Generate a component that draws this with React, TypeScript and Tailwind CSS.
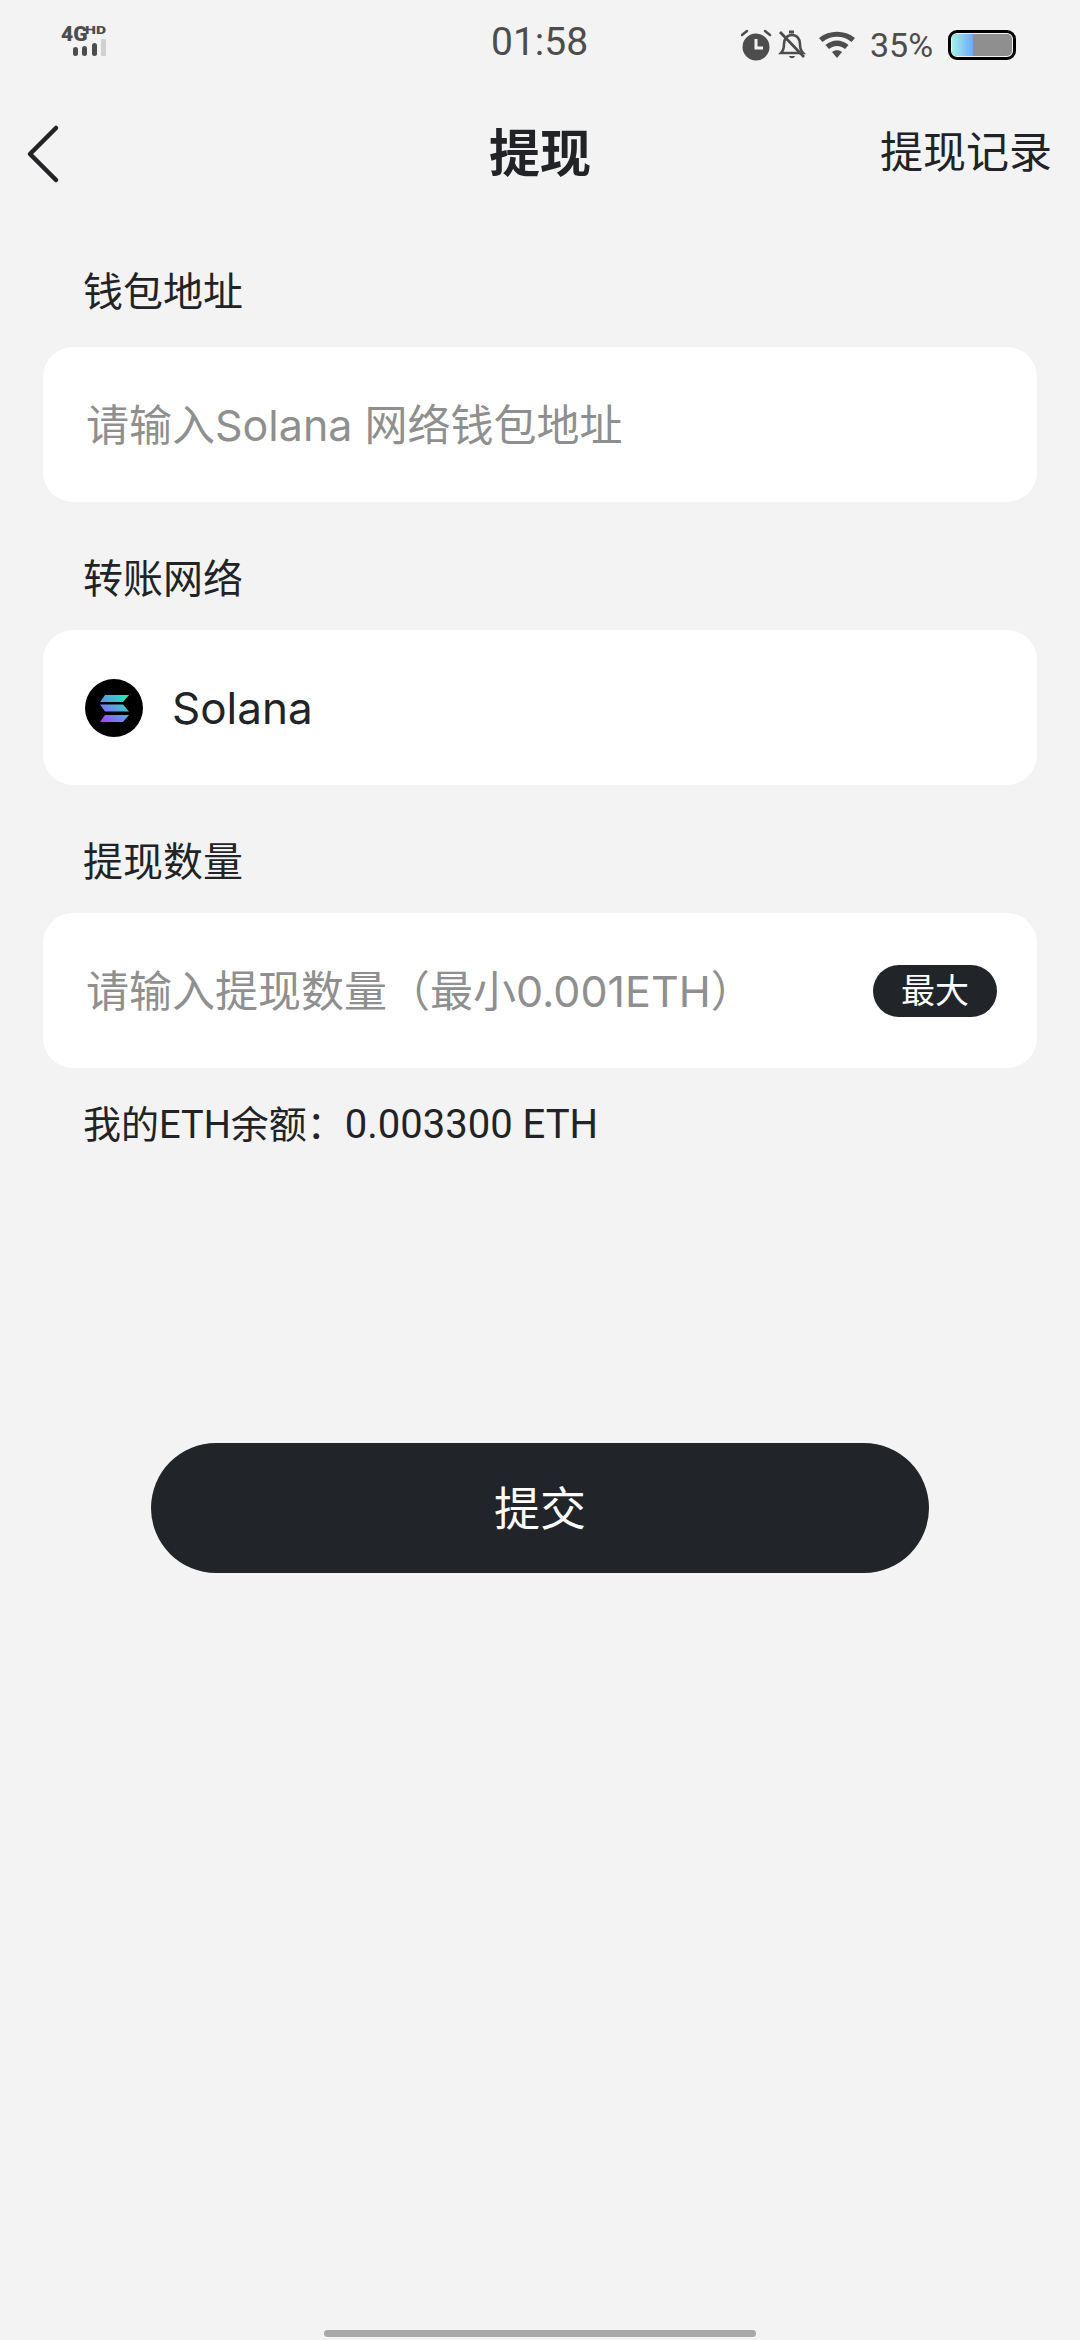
import { ChevronLeft } from 'lucide-react';

const cjk = "font-['Inter','Noto_Sans_CJK_SC',sans-serif] [text-spacing-trim:space-all]";

function StatusBar() {
  return (
    <div className="relative flex h-[104px] items-center text-[#4d4d4d]">
      {/* signal */}
      <svg className="absolute left-[60px] top-[22px]" width="50" height="36" viewBox="0 0 50 36">
        <text x="1" y="19" fontFamily="Roboto" fontWeight="900" fontSize="21" fill="#4d4d4d">4G</text>
        <text x="25" y="12" fontFamily="Roboto" fontWeight="900" fontSize="11.5" textLength="21" lengthAdjust="spacingAndGlyphs" fill="#4d4d4d">HD</text>
        <rect x="13" y="25" width="5" height="9" rx="2.5" fill="#4d4d4d" />
        <rect x="22" y="24" width="5" height="10" rx="2.5" fill="#4d4d4d" />
        <rect x="32" y="21" width="5" height="13" rx="2.5" fill="#4d4d4d" />
        <rect x="41" y="17" width="5" height="17" rx="1" fill="#d0d0d0" />
      </svg>
      <div className="absolute left-[491px] top-[20px] font-['Roboto',sans-serif] text-[39px] leading-[44px]">01:58</div>
      <div className="absolute left-[741px] top-[27px] flex items-center">
        <svg width="32" height="32" viewBox="0 0 32 32">
          <circle cx="15" cy="18" r="13.5" fill="#4d4d4d" />
          <path d="M1 6l5-4M29 6l-5-4" stroke="#4d4d4d" strokeWidth="2.5" strokeLinecap="round" />
          <path d="M15 10v9h7" stroke="#f3f3f3" strokeWidth="3" fill="none" />
        </svg>
        <svg className="ml-[5px]" width="28" height="32" viewBox="0 0 28 32">
          <path d="M3 24c2-2 3-4 3-9 0-5 3-9 8-9s8 4 8 9c0 5 1 7 3 9z" fill="none" stroke="#4d4d4d" strokeWidth="2.6" />
          <path d="M11 27c1 3 5 3 6 0z" fill="#4d4d4d" />
          <path d="M11 3h5" stroke="#4d4d4d" strokeWidth="3" />
          <path d="M2 3l24 25" stroke="#4d4d4d" strokeWidth="2.8" />
        </svg>
        <svg className="ml-[12px]" width="38" height="30" viewBox="0 0 38 30">
          <path d="M1 8c10-8.500 26-8.500 36 0l-3.500 4c-8-7-21-7-29 0z" fill="#4d4d4d" />
          <path d="M7.500 15c7-6 16-6 23 0l-3.500 4c-5-4-11-4-16 0z" fill="#4d4d4d" />
          <path d="M14 22c3-2.500 7-2.500 10 0l-5 6z" fill="#4d4d4d" />
        </svg>
        <div className="ml-[14px] font-['Roboto',sans-serif] text-[34px] leading-[36px]">35%</div>
        <div className="ml-[15px] h-[30px] w-[68px] rounded-[9px] border-[3px] border-black bg-[#f3f3f3] p-[1px]">
          <div className="flex h-full overflow-hidden rounded-[5px] bg-[#8f8f8f]">
            <div className="h-full w-[21px] bg-gradient-to-r from-[#a5eee8] to-[#6fa8fb]" />
          </div>
        </div>
      </div>
    </div>
  );
}

function Field({ children }: { children: React.ReactNode }) {
  return (
    <div className="mx-[43px] flex h-[155px] items-center rounded-[30px] bg-white pl-[43px] pr-[40px]">
      {children}
    </div>
  );
}

function Label({ text, className }: { text: string; className: string }) {
  return <div className={`pl-[83px] text-[40px] leading-[48px] text-[#222326] ${className}`}>{text}</div>;
}

export default function App() {
  return (
    <div className={`relative h-[2340px] w-[1080px] overflow-hidden bg-[#f3f3f3] ${cjk}`}>
      <StatusBar />

      {/* header */}
      <div className="relative flex h-[100px] items-center justify-center">
        <ChevronLeft className="absolute -left-[9px] -top-[2px] text-[#222326]" size={104} strokeWidth={1.05} />
        <div className="text-[51px] font-bold leading-[60px] text-[#222326]">提现</div>
        <div className="absolute right-[28px] top-[22px] text-[43px] leading-[52px] text-[#222326]">提现记录</div>
      </div>

      <Label text="钱包地址" className="mb-[31px] mt-[64px]" />
      <Field>
        <span className="pt-[2px] text-[43px] text-[#8f8f8f]">请输入Solana 网络钱包地址</span>
      </Field>

      <Label text="转账网络" className="mb-[27px] mt-[53px]" />
      <Field>
        <svg width="58" height="58" viewBox="0 0 58 58" className="-ml-[1px]">
          <defs>
            <linearGradient id="sol" x1="0" y1="1" x2="1" y2="0">
              <stop offset="0" stopColor="#a83cff" />
              <stop offset="0.5" stopColor="#5f9be8" />
              <stop offset="1" stopColor="#14f9a0" />
            </linearGradient>
          </defs>
          <circle cx="29" cy="29" r="29" fill="#000" />
          <path d="M20 16h24l-6 7H15zM15 25.500h23l6 7H20zM20 36h24l-6 7H15z" fill="url(#sol)" />
        </svg>
        <span className="ml-[29px] text-[44px] text-[#222326]">Solana</span>
      </Field>

      <Label text="提现数量" className="mb-[27px] mt-[53px]" />
      <Field>
        <span className="pt-[2px] text-[43px] text-[#8f8f8f]">请输入提现数量（最小0.001ETH）</span>
        <button className="ml-auto flex h-[52px] w-[124px] items-center justify-center rounded-full bg-[#212429] text-[34px] text-white">
          最大
        </button>
      </Field>

      <div className="mt-[34px] pl-[83px] font-['Roboto','Noto_Sans_CJK_SC',sans-serif] text-[38px] leading-[46px] text-[#222326]">
        我的ETH余额：<span className="text-[40px]">0.003300 ETH</span>
      </div>

      <div className="mt-[295px] flex justify-center">
        <button className="h-[130px] w-[778px] rounded-full bg-[#212429] text-[46px] text-white">提交</button>
      </div>

      <div className="absolute bottom-[3px] left-[324px] h-[7px] w-[432px] rounded-full bg-[#a8a8a8]" />
    </div>
  );
}
